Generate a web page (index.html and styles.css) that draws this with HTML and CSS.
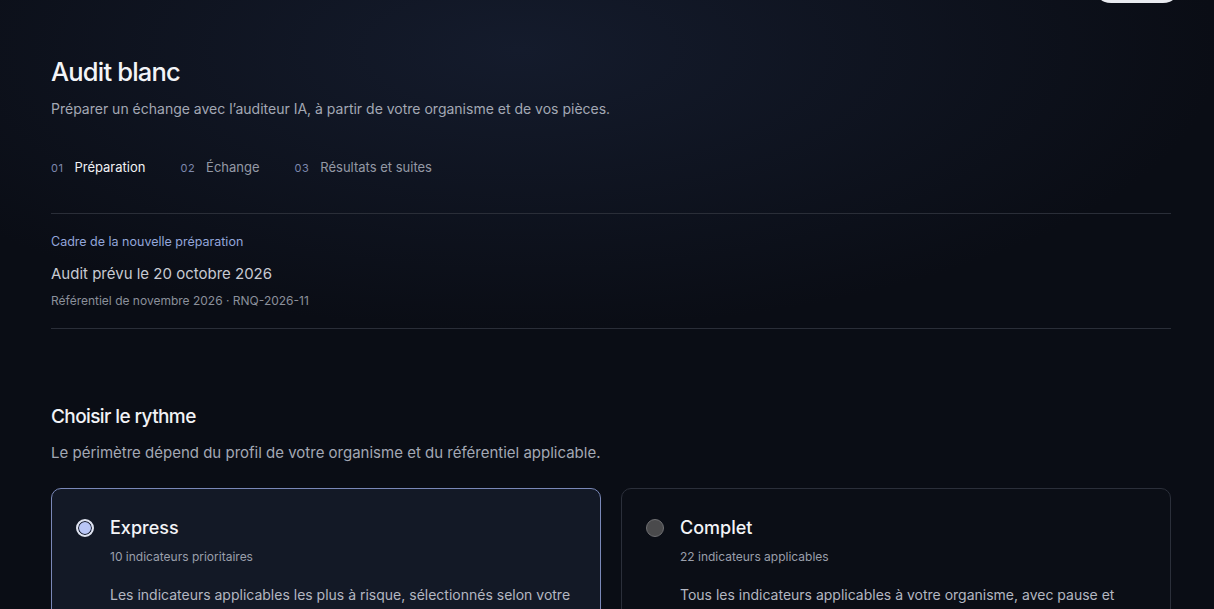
FILE: index.html
```html
<!DOCTYPE html>
<html lang="fr">
<head>
    <meta charset="UTF-8">
    <meta name="viewport" content="width=device-width, initial-scale=1.0">
    <title>Audit blanc</title>
    <link rel="stylesheet" href="styles.css">
</head>
<body>
    <header class="topbar">
        <span class="topbar-btn" aria-label="Quitter"></span>
    </header>

    <main class="page">
        <section class="intro">
            <h1>Audit blanc</h1>
            <p class="lead">Préparer un échange avec l’auditeur IA, à partir de votre organisme et de vos pièces.</p>

            <ol class="steps">
                <li class="step active"><span class="step-num">01</span>Préparation</li>
                <li class="step"><span class="step-num">02</span>Échange</li>
                <li class="step"><span class="step-num">03</span>Résultats et suites</li>
            </ol>
        </section>

        <section class="frame">
            <div class="frame-label">Cadre de la nouvelle préparation</div>
            <div class="frame-date">Audit prévu le 20 octobre 2026</div>
            <div class="frame-ref">Référentiel de novembre 2026 · RNQ-2026-11</div>
        </section>

        <section class="rhythm">
            <h2>Choisir le rythme</h2>
            <p class="lead">Le périmètre dépend du profil de votre organisme et du référentiel applicable.</p>

            <div class="options">
                <label class="option selected">
                    <span class="radio"></span>
                    <div class="option-body">
                        <div class="option-title">Express</div>
                        <div class="option-meta">10 indicateurs prioritaires</div>
                        <p class="option-desc">Les indicateurs applicables les plus à risque, sélectionnés selon votre profil et votre activité.</p>
                    </div>
                </label>
                <label class="option">
                    <span class="radio"></span>
                    <div class="option-body">
                        <div class="option-title">Complet</div>
                        <div class="option-meta">22 indicateurs applicables</div>
                        <p class="option-desc">Tous les indicateurs applicables à votre organisme, avec pause et reprise possibles.</p>
                    </div>
                </label>
            </div>
        </section>
    </main>
</body>
</html>
```

FILE: styles.css
```css
* {
    box-sizing: border-box;
}

body {
    margin: 0;
    min-height: 100vh;
    font-family: Inter, "Noto Sans", sans-serif;
    color: #e6e8ee;
    background:
        radial-gradient(ellipse 700px 280px at 520px 50px, #141b2c 0%, rgba(20, 27, 44, 0) 100%),
        #0a0d15;
    overflow: hidden;
}

.topbar {
    display: flex;
    justify-content: flex-end;
    padding: 0 33px 0 0;
    margin-top: -33px;
}

.topbar-btn {
    display: block;
    height: 36px;
    width: 88px;
    border-radius: 18px;
    background: #e9ebf0;
}

.page {
    width: 1120px;
    margin-left: 51px;
    padding-top: 51px;
}

h1 {
    margin: 0;
    font-size: 25.5px;
    font-weight: 500;
    letter-spacing: -0.8px;
    color: #f3f4f7;
    line-height: 36px;
}

.lead {
    margin: 8px 0 0;
    font-size: 14px;
    color: #a3a8b4;
    line-height: 22px;
}

.steps {
    display: flex;
    gap: 35px;
    list-style: none;
    margin: 37px 0 0;
    padding: 0 0 35px;
    border-bottom: 1px solid #2a2e38;
}

.step {
    display: flex;
    align-items: baseline;
    font-size: 13px;
    color: #9499a5;
    line-height: 20px;
}

.step.active {
    color: #f1f2f5;
}

.step-num {
    font-size: 11px;
    color: #7d88ad;
    margin-right: 11px;
    letter-spacing: 0.5px;
}

.frame {
    padding: 20px 0 19px;
    border-bottom: 1px solid #2a2e38;
}

.frame-label {
    font-size: 12.5px;
    color: #93a6da;
    line-height: 16px;
}

.frame-date {
    margin-top: 14px;
    font-size: 15px;
    color: #c7cad2;
    line-height: 20px;
}

.frame-ref {
    margin-top: 9px;
    font-size: 12px;
    color: #8b909b;
    line-height: 16px;
}

.rhythm {
    padding-top: 75px;
}

h2 {
    margin: 0;
    font-size: 19px;
    font-weight: 500;
    letter-spacing: -0.6px;
    color: #f1f2f5;
    line-height: 26px;
}

.rhythm .lead {
    margin-top: 12px;
    font-size: 15px;
}

.options {
    display: grid;
    grid-template-columns: 1fr 1fr;
    gap: 20px;
    margin-top: 24px;
}

.option {
    display: flex;
    gap: 16px;
    padding: 28px 24px 24px 24px;
    border: 1px solid #2b2f3a;
    border-radius: 10px;
    background: #0b0e16;
    cursor: pointer;
}

.option.selected {
    border-color: #7a88b8;
    background: #131926;
}

.radio {
    flex: none;
    width: 18px;
    height: 18px;
    margin-top: 2px;
    border-radius: 50%;
    border: 1px solid #6f6f72;
    background: #4a4a4c;
}

.selected .radio {
    border: 2px solid #dfe3ef;
    background: #b9c6f6;
    box-shadow: inset 0 0 0 1px #131926;
}

.option-title {
    font-size: 18px;
    font-weight: 500;
    color: #f3f4f7;
    line-height: 22px;
}

.option-meta {
    margin-top: 10px;
    font-size: 12px;
    color: #9a9fab;
    line-height: 16px;
}

.option-desc {
    margin: 18px 0 0;
    font-size: 14px;
    color: #b3b7c1;
    line-height: 24px;
}
```
